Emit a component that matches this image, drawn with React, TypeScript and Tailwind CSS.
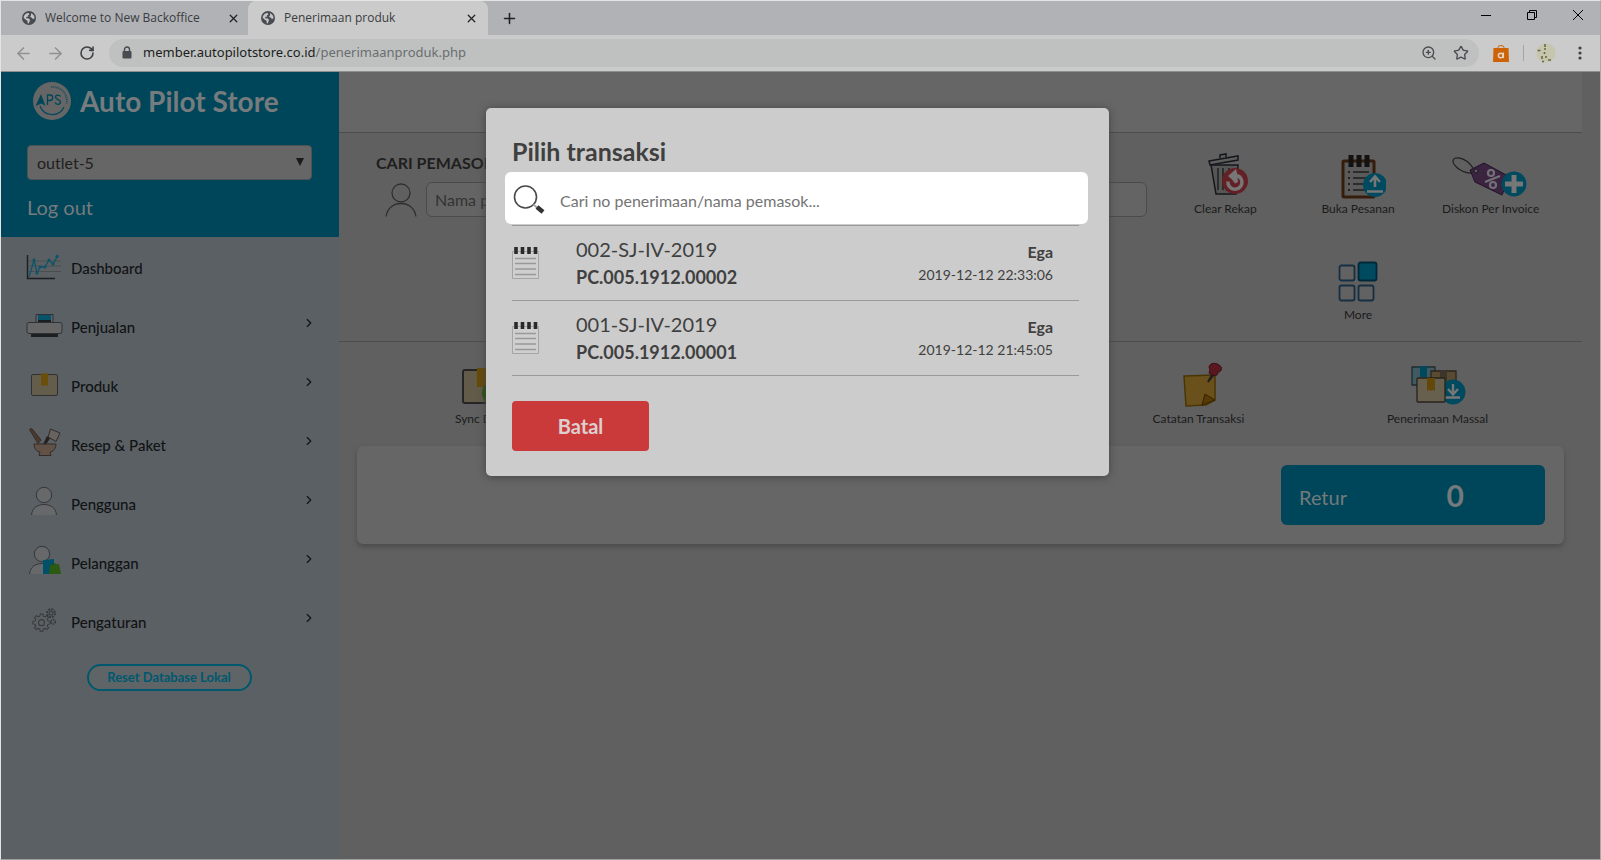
import type { ReactNode } from "react";
import { ArrowLeft, ArrowRight, ChevronRight, Plus, RotateCw, Star, X, ZoomIn } from "lucide-react";

function GlobeIcon() {
  return (
    <svg viewBox="0 0 16 16" className="size-4 shrink-0" aria-hidden="true">
      <circle cx="8" cy="8" r="7" fill="#484b50" />
      <path d="M2.500 7.500C3 5 5 3 7.500 3l1 1.200-1.700 1.300.4 1.300H5.500L5 8.300l3 .2 1 1.500-1.200 3.500-1.300-.5.2-2-2.200-1.500Z" fill="#c4c5c8" />
      <path d="M10 3.200c2 .8 3.500 2.500 3.600 5l-1.600.8-1.500-1.500-1.500-.8 1-1.200Z" fill="#c4c5c8" />
    </svg>
  );
}

function LockIcon() {
  return (
    <svg viewBox="0 0 10 14" className="h-[14px] w-[10px] shrink-0" aria-hidden="true">
      <path d="M2.500 6V3.500a2.500 2.500 0 0 1 5 0V6" fill="none" stroke="#484b50" strokeWidth="1.400" />
      <rect x="0.500" y="5" width="9" height="7.500" rx="1" fill="#484b50" />
    </svg>
  );
}

function Tab({ title, active }: { title: string; active?: boolean }) {
  return (
    <div
      className={
        active
          ? "flex w-60 items-center gap-2 rounded-t-lg bg-[#cbcbcb] pl-3 pr-2.5"
          : "flex w-[247px] items-center gap-2 pl-5 pr-2"
      }
    >
      <GlobeIcon />
      <span className="flex-1 truncate font-['Open_Sans',sans-serif] text-xs text-[#3a3c40]">{title}</span>
      <button aria-label={"Close " + title} className="text-[#222]">
        <X size={13} strokeWidth={2.400} />
      </button>
    </div>
  );
}

function BrowserChrome() {
  return (
    <header className="font-['Noto_Sans',sans-serif]">
      <div className="flex h-[34px] bg-[#b1b2b6]">
        <Tab title="Welcome to New Backoffice" />
        <Tab title="Penerimaan produk" active />
        <button aria-label="New tab" className="ml-[13px] text-[#222]">
          <Plus size={17} strokeWidth={2.200} />
        </button>
        <div className="ml-auto flex items-start gap-9 pr-[17px] pt-[9px] text-black">
          <button aria-label="Minimize">
            <svg width="10" height="10" viewBox="0 0 10 10"><path d="M0 5.500h10" stroke="currentColor" /></svg>
          </button>
          <button aria-label="Restore">
            <svg width="10" height="10" viewBox="0 0 10 10" fill="none" stroke="currentColor"><path d="M.5 2.500h7v7h-7zM2.500 2V.5h7v7H8" /></svg>
          </button>
          <button aria-label="Close window">
            <svg width="10" height="10" viewBox="0 0 10 10"><path d="m0 0 10 10M10 0 0 10" stroke="currentColor" /></svg>
          </button>
        </div>
      </div>
      <div className="flex h-[37px] items-center border-b border-[#8d8e8e] bg-[#cbcbcb] pl-[13px]">
        <button aria-label="Back" className="text-[#8f9092]"><ArrowLeft size={19} /></button>
        <button aria-label="Forward" className="ml-[13px] text-[#8f9092]"><ArrowRight size={19} /></button>
        <button aria-label="Reload" className="ml-[14px] text-[#3f4145]"><RotateCw size={16} strokeWidth={2.400} /></button>
        <div className="ml-3.5 flex h-7 flex-1 items-center rounded-full bg-[#bfc1c0] pl-[13px] pr-2.5">
          <LockIcon />
          <span className="ml-[11px] flex-1 text-[13px] text-[#1c1d20]">
            member.autopilotstore.co.id<span className="text-[#6a6d70]">/penerimaanproduk.php</span>
          </span>
          <ZoomIn size={16} className="text-[#484b50]" />
          <Star size={16} className="ml-4 text-[#484b50]" />
        </div>
        <svg viewBox="0 0 16 17" className="ml-3.5 h-[17px] w-4" aria-hidden="true">
          <path d="M5 4V2.500a3 2 0 0 1 6 0V4" fill="none" stroke="#cd6306" />
          <path d="M.5 3h15L16 17H0Z" fill="#cd6306" />
          <circle cx="7.700" cy="10.500" r="2.300" fill="none" stroke="#e6d3c2" strokeWidth="1.500" />
          <path d="M10.300 7.500v5.600" stroke="#e6d3c2" strokeWidth="1.500" />
        </svg>
        <span className="ml-3.5 h-4 w-px bg-[#a2a4a5]" />
        <svg viewBox="0 0 20 20" className="ml-3 size-5" aria-hidden="true">
          <circle cx="10" cy="10" r="9.500" fill="#c5c6ac" />
          <path d="M9 1v3M8 6h2M1.500 7.500h3M8.500 9v2M6 13v3M10 13v2M12 17h3M6 18.500h2" stroke="#69664d" strokeWidth="1.600" />
        </svg>
        <button aria-label="Browser menu" className="ml-4 mr-3">
          <svg width="16" height="16" viewBox="0 0 16 16" fill="#3f4145"><circle cx="8" cy="3" r="1.600" /><circle cx="8" cy="8" r="1.600" /><circle cx="8" cy="13" r="1.600" /></svg>
        </button>
      </div>
    </header>
  );
}

function BrandMark() {
  return (
    <svg viewBox="0 0 40 40" className="size-10 shrink-0" aria-hidden="true">
      <circle cx="20" cy="20" r="19" fill="#666" />
      <g fill="none" stroke="#00465a">
        <path d="M8 25a13 13 0 0 0 24 1" strokeWidth="1.200" />
        <path d="M19 6a14 14 0 0 1 15.500 17" strokeWidth="1.800" strokeDasharray="1 .8" opacity=".7" />
        <path d="M15.500 24V14h2.500a2.700 2.700 0 0 1 0 5.500h-2.500" strokeWidth="1.300" />
        <path d="M28.500 15.500c-1-2-5-2-5 .6 0 3 5 2 5 5 0 2.900-4.500 2.900-5.500.5" strokeWidth="1.300" />
      </g>
      <path d="m9 13 4.500 12-4-2.500-6 2.500Z" fill="#00465a" />
    </svg>
  );
}

function PersonShape({ x = 18 }: { x?: number }) {
  return (
    <g transform={`translate(${x - 18} -2)`} stroke="#33373a" fill="#676869">
      <path d="M5.500 32C6 25 11.500 21.500 18 21.500S30 25 30.500 32" />
      <circle cx="18" cy="12" r="7.700" />
    </g>
  );
}

const GEAR_BIG = "M12.500 14h3l.5 2.500 2 .8 2-1.500 2.200 2.200-1.500 2 .8 2 2.500.5v3l-2.500.5-.8 2 1.500 2-2.200 2.200-2-1.500-2 .8-.5 2.500h-3l-.5-2.500-2-.8-2 1.500L5.800 30l1.500-2-.8-2-2.500-.5v-3l2.500-.5.8-2-1.500-2L8 15.800l2 1.500 2-.8Z";

const menu: { label: string; icon: ReactNode; expands: boolean }[] = [
  {
    label: "Dashboard",
    expands: false,
    icon: (
      <g fill="none">
        <path d="M3 12h32M3 17h32M3 22.500h32" stroke="#4a4e51" />
        <path d="M3 28 8 11l3 13 3-6 5 0 4-7 4 4 4-7" stroke="#0d5468" strokeWidth="1.300" />
        <g fill="#0d5468"><circle cx="8" cy="11" r="1.500" /><circle cx="11" cy="24" r="1.500" /><circle cx="14" cy="18" r="1.500" /><circle cx="19" cy="18" r="1.500" /><circle cx="23" cy="11" r="1.500" /><circle cx="27" cy="15" r="1.500" /><circle cx="31" cy="7.500" r="1.700" /></g>
        <path d="M1.500 6v23.500H29" stroke="#1c1f21" strokeWidth="1.400" />
      </g>
    ),
  },
  {
    label: "Penjualan",
    expands: true,
    icon: (
      <g stroke="#2f3234">
        <path d="M10 15V6.500h17V15" fill="#5e6265" />
        <path d="M12 7h13v6H12z" fill="#07536a" stroke="none" />
        <path d="M12 12h13v3H12z" fill="#1b1d1e" stroke="none" />
        <rect x="1" y="14.500" width="35" height="11" rx="2" fill="#666" />
        <path d="M5 26h27v3H5z" fill="#1d1f20" stroke="none" />
      </g>
    ),
  },
  {
    label: "Produk",
    expands: true,
    icon: (
      <g>
        <rect x="5.500" y="7.500" width="26" height="21" rx="1.500" fill="#645d4b" stroke="#303030" />
        <path d="M15 6.500h7v12h-7z" fill="#6a4f0b" />
      </g>
    ),
  },
  {
    label: "Resep & Paket",
    expands: true,
    icon: (
      <g stroke="#332c28" transform="translate(0 -1)">
        <path d="M3.500 4.500c1-1.500 3-1 3.500.5l8 10-3 3.500Z" fill="#4b3930" />
        <path d="m24.500 4 9.500 4-4 8.500-8-4.500Z" fill="#676361" />
        <path d="m21 11 3 2.500-4 6h-3Z" fill="#242120" stroke="none" />
        <path d="M8 19h22c0 4.500-3 8-6 8l1 3.500H13l1-3.500c-3 0-6-3.500-6-8Z" fill="#625146" />
      </g>
    ),
  },
  { label: "Pengguna", expands: true, icon: <PersonShape /> },
  {
    label: "Pelanggan",
    expands: true,
    icon: (
      <g>
        <PersonShape x={16} />
        <path d="m17 16 11-1v15H17Z" fill="#00506a" />
        <path d="m24 21 9-1 2 10H23Z" fill="#2d5a12" />
        <path d="M26 22c0-3 4-3 4-1" fill="none" stroke="#234a0e" />
      </g>
    ),
  },
  {
    label: "Pengaturan",
    expands: true,
    icon: (
      <g fill="none" stroke="#36393b" strokeWidth="1.200" transform="translate(3.500 -1) scale(.86)">
        <path d={GEAR_BIG} />
        <circle cx="14" cy="24" r="3.500" />
        <circle cx="25" cy="13" r="4.500" strokeWidth="2.400" strokeDasharray="2.300 1.200" />
        <circle cx="25" cy="13" r="2" />
        <circle cx="27.500" cy="23" r="2.500" strokeWidth="2" strokeDasharray="1.600 1" />
      </g>
    ),
  },
];

function Sidebar() {
  return (
    <aside className="w-[338px] shrink-0 bg-[#5b6064]">
      <div className="h-[165px] bg-[#00465a] pl-[26px] pr-[27px] pt-[9px] text-[#767b7d]">
        <div className="flex items-center gap-2 pl-[5px]">
          <BrandMark />
          <span className="text-[28px] font-bold leading-10">Auto Pilot Store</span>
        </div>
        <div className="relative mt-6">
          <select
            aria-label="Outlet"
            className="block h-[35px] w-full appearance-none rounded border border-[#4d5254] bg-[#666] px-[9px] text-base text-[#202020]"
          >
            <option>outlet-5</option>
          </select>
          <svg viewBox="0 0 8 8" className="pointer-events-none absolute right-2 top-[13px] size-2" aria-hidden="true"><path d="M0 0h8L4 8Z" fill="#1a1a1a" /></svg>
        </div>
        <a href="#logout" className="mt-[13px] inline-block text-xl leading-7">Log out</a>
      </div>
      <nav className="flex flex-col pt-0.5">
        {menu.map((item) => (
          <a key={item.label} href={"#" + item.label} className="flex h-[59px] items-center pl-[25px] pr-[23px] text-[#111315]">
            <svg viewBox="0 0 37 36" className="mb-1 h-9 w-[37px]" aria-hidden="true">{item.icon}</svg>
            <span className="ml-2 flex-1 text-[15px] font-medium">{item.label}</span>
            {item.expands && <ChevronRight size={14} className="mb-2.5" />}
          </a>
        ))}
      </nav>
      <div className="mt-3 flex justify-center pr-0.5">
        <button className="h-[27px] w-[165px] rounded-full border-2 border-[#00586f] bg-[#5f6467] text-[13px] font-bold text-[#00586f]">
          Reset Database Lokal
        </button>
      </div>
    </aside>
  );
}

function ToolButton({ label, icon, width = "w-12" }: { label: string; icon: ReactNode; width?: "w-12" | "w-20" | "w-14" }) {
  return (
    <button className="flex flex-col items-center gap-0.5 text-xs leading-4 text-[#1b1b1b]">
      <svg viewBox={width === "w-20" ? "0 0 80 48" : width === "w-14" ? "0 0 56 48" : "0 0 48 48"} className={width + " h-12"} aria-hidden="true">{icon}</svg>
      {label}
    </button>
  );
}

const trashIcon = (
  <g transform="translate(3 0)">
    <path d="M7 14h27l-2 29H12Z" fill="#565656" stroke="#15171c" strokeWidth="1.500" />
    <path d="M14 17v22M19 17v22M25 17v22" stroke="#2d2d2d" strokeWidth="2" />
    <path d="m5 10 29-5v4L6 14Z" fill="#5e5e5e" stroke="#15171c" strokeWidth="1.500" />
    <path d="M16 7V4l6-1v3" fill="none" stroke="#15171c" strokeWidth="1.500" />
    <circle cx="31" cy="30" r="13" fill="#632126" />
    <path d="M33 24.500a7 7 0 1 1-9 6" fill="none" stroke="#777" strokeWidth="3.500" />
    <path d="m24 25 8-7 1 4 1 9-3 1.500-3-4Z" fill="#777" />
  </g>
);

const orderIcon = (
  <g transform="translate(4 0)">
    <rect x="9" y="10" width="31" height="36" rx="1" fill="#5a5a5a" stroke="#351c0b" strokeWidth="3" />
    <path d="M17 4v12M25 4v12M33 4v12" stroke="#121212" strokeWidth="5" />
    <path d="M19 21h16M19 27h16M19 33h14M19 39h12" stroke="#2c2c2c" strokeWidth="2.200" />
    <path d="M14 21h2M14 27h2M14 33h2M14 39h2" stroke="#222" strokeWidth="2.200" />
    <circle cx="41" cy="34" r="12" fill="#004a60" />
    <path d="M41 36V26m-5 5 5-5.500 5 5.500M33 40.500h16" fill="none" stroke="#777" strokeWidth="2.600" />
  </g>
);

const discountIcon = (
  <g transform="translate(-2 1)">
    <path d="M24 21C14 22 4 14 4 9s12-5 20 7" fill="none" stroke="#202020" strokeWidth="1.200" />
    <path d="m21 18 14-7 26 14-8 18-27-13Z" fill="#3a2440" stroke="#221228" />
    <circle cx="27" cy="19" r="2" fill="#5f5f5f" stroke="#1c1420" />
    <g fill="none" stroke="#737077" strokeWidth="2.200"><circle cx="42" cy="21" r="3" /><circle cx="44" cy="33" r="3" /><path d="m51 24-15 6" /></g>
    <circle cx="65" cy="32" r="12.500" fill="#004a60" />
    <path d="M65 23v18M56 32h18" stroke="#777" strokeWidth="5" />
  </g>
);

const moreIcon = (
  <g stroke="#162f43" strokeWidth="1.800" fill="#626262">
    <rect x="5.500" y="8.500" width="15" height="15" rx="2" />
    <rect x="5.500" y="28.500" width="15" height="15" rx="2" />
    <rect x="24.500" y="28.500" width="15" height="15" rx="2" />
    <rect x="24.500" y="5.500" width="18" height="18" rx="2" fill="#004a60" stroke="#00283a" />
  </g>
);

const syncIcon = (
  <g>
    <rect x="6" y="9" width="38" height="33" rx="2" fill="#625b4a" stroke="#252525" strokeWidth="2" />
    <path d="M20 7h11v19H20z" fill="#664a07" />
    <circle cx="37" cy="32" r="12" fill="#29520e" />
  </g>
);

const noteIcon = (
  <g transform="translate(5 0)">
    <path d="m5 15 31-1v25l-9 5-20 1Z" fill="#6a511b" stroke="#493606" strokeWidth="1.500" />
    <path d="m23 44 3-11 10 6Z" fill="#573a05" stroke="#352302" />
    <path d="m29 21 6-11 2 1Z" stroke="#202020" strokeWidth="2" />
    <path d="M30 6c1-5 8-4 10-2 5 3 2 7-1 7 0 4-3 5-9 1l1-3Z" fill="#5b171f" stroke="#371014" />
  </g>
);

const bulkIcon = (
  <g strokeWidth="1.300">
    <path d="M2 6h23v18H2z" fill="#415a62" stroke="#1d2b30" />
    <path d="M10 5h7v11h-7z" fill="#00485c" />
    <path d="M21 10h25v20H21z" fill="#584b32" stroke="#2b251b" />
    <path d="M30 10h7v10h-7z" fill="#3c3529" />
    <circle cx="43" cy="31" r="12.500" fill="#004a60" />
    <path d="M43 23v9m-5-4 5 5.500 5-5.500M35 36.500h15" fill="none" stroke="#777" strokeWidth="2.400" />
    <rect x="7" y="17" width="28" height="24" rx="1" fill="#68604f" stroke="#27231c" />
    <path d="M17 17h8v13l-2-1-2 1-2-1-2 1Z" fill="#64480a" />
  </g>
);

function Workspace() {
  return (
    <main className="flex min-w-0 flex-1 flex-col bg-[#606060] pr-[18px]">
      <div className="h-[61px] border-b border-[#4c4c4c] bg-[#666]" />
      <section className="flex h-[209px] border-b border-[#4c4c4c] pl-[37px] pr-[25px]">
        <div className="min-w-0 flex-1 pr-3 pt-[19px]">
          <label htmlFor="supplier" className="block text-base font-bold leading-[22px] text-[#1e1e1e]">CARI PEMASOK</label>
          <div className="mt-2 flex">
            <svg viewBox="0 0 37 36" className="ml-[5px] mr-[7px] h-9 w-[38px] shrink-0" fill="none" stroke="#303030" aria-hidden="true">
              <circle cx="19.500" cy="11" r="9" strokeWidth="1.300" />
              <path d="M4.500 34.500C6 26 12 21.500 19.500 21.500S33 26 34.500 34.500" strokeWidth="1.300" />
            </svg>
            <input
              id="supplier"
              placeholder="Nama pemasok"
              className="h-[35px] min-w-0 flex-1 rounded-md border border-[#4b4b4b] bg-[#646464] px-2 text-base placeholder:text-[#333]"
            />
          </div>
        </div>
        <div className="grid w-[398px] shrink-0 grid-cols-3 content-start justify-items-center gap-y-10 pt-[18px]">
          <ToolButton label="Clear Rekap" icon={trashIcon} />
          <ToolButton label="Buka Pesanan" icon={orderIcon} width="w-14" />
          <ToolButton label="Diskon Per Invoice" icon={discountIcon} width="w-20" />
          <div className="col-start-2">
            <ToolButton label="More" icon={moreIcon} />
          </div>
        </div>
      </section>
      <section className="grid h-[104px] grid-cols-5 justify-items-center pl-[23px] pr-[25px] pt-[19px]">
        <ToolButton label="Sync Data" icon={syncIcon} />
        <div className="col-start-4"><ToolButton label="Catatan Transaksi" icon={noteIcon} /></div>
        <ToolButton label="Penerimaan Massal" icon={bulkIcon} width="w-14" />
      </section>
      <section className="ml-[18px] mr-[18px] flex justify-end rounded-md bg-[#666] p-[19px] shadow-[0_3px_5px_#4c4c4c]">
        <div className="flex h-[60px] w-[264px] items-center rounded-md bg-[#00465a] pl-[18px] text-[#747a7c]">
          <span className="pt-1 text-xl">Retur</span>
          <strong className="ml-auto pr-[81px] text-3xl font-bold">0</strong>
        </div>
      </section>
    </main>
  );
}

const transactions = [
  { reference: "002-SJ-IV-2019", code: "PC.005.1912.00002", user: "Ega", time: "2019-12-12 22:33:06" },
  { reference: "001-SJ-IV-2019", code: "PC.005.1912.00001", user: "Ega", time: "2019-12-12 21:45:05" },
];

function TransactionDialog() {
  return (
    <div className="absolute inset-0 flex items-start justify-center pr-1.5 pt-9">
      <div role="dialog" aria-labelledby="dialog-title" className="w-[623px] rounded-[5px] bg-[#ccc] pb-[25px] pl-[26px] pr-[21px] pt-[25px] text-[#404040] shadow-[0_1px_8px_#444]">
        <h1 id="dialog-title" className="mb-[3px] text-[25px] font-bold leading-9">Pilih transaksi</h1>
        <label className="-ml-[7px] flex h-[52px] items-center rounded-md bg-white pl-2 pt-1">
          <svg viewBox="0 0 32 32" className="size-8" aria-hidden="true">
            <circle cx="12.500" cy="13" r="11" fill="none" stroke="#4a4a4a" strokeWidth="1.600" />
            <path d="m20.500 20.500 4 3.500" stroke="#aaa" strokeWidth="2" />
            <path d="m24 23 6 5" stroke="#333" strokeWidth="4.500" />
          </svg>
          <input aria-label="Cari transaksi" placeholder="Cari no penerimaan/nama pemasok..." className="ml-[15px] flex-1 bg-transparent pt-0.5 text-base outline-none placeholder:text-[#747474]" />
        </label>
        <ul className="mr-[9px] mt-px border-t border-[#999]">
          {transactions.map((item) => (
            <li key={item.code} className="flex h-[75px] items-center border-b border-[#999] pr-[26px]">
              <svg viewBox="0 0 28 34" className="h-[34px] w-7" aria-hidden="true">
                <path d="M.5 5.500h26v27H.5z" fill="#cfcfcf" stroke="#a5a5a5" />
                <path d="M3 12.500h21M3 17.500h21M3 23h21M3 28.500h21" stroke="#999" strokeWidth="1.600" />
                <path d="M4 1v7M10.500 1v7M17 1v7M23.500 1v7" stroke="#2a2a2a" strokeWidth="3.600" />
              </svg>
              <div className="ml-9 flex-1">
                <p className="text-xl leading-7">{item.reference}</p>
                <p className="text-lg font-bold leading-7">{item.code}</p>
              </div>
              <div className="text-right">
                <p className="text-base font-bold leading-6">{item.user}</p>
                <p className="text-sm leading-[22px]">{item.time}</p>
              </div>
            </li>
          ))}
        </ul>
        <button className="mt-[25px] h-[50px] w-[137px] rounded bg-[#cb3a3b] text-xl font-bold text-[#dccfcf]">Batal</button>
      </div>
    </div>
  );
}

export default function App() {
  return (
    <div className="flex min-h-screen flex-col border border-b-[#a0a0a0] border-l-[#e4e4e4] border-r-[#a8a8a8] border-t-[#e4e4e4] font-['Lato','Liberation_Sans',sans-serif]">
      <BrowserChrome />
      <div className="relative flex flex-1">
        <Sidebar />
        <Workspace />
        <TransactionDialog />
      </div>
    </div>
  );
}
